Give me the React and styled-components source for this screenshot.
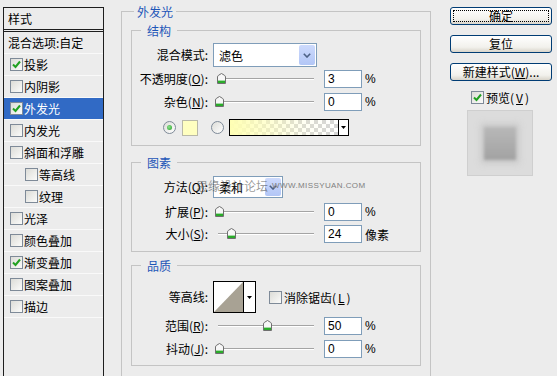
import React from "react";
import styled, { createGlobalStyle } from "styled-components";

const GlobalStyle = createGlobalStyle`
  html, body {
    margin: 0;
    padding: 0;
    background: #ececec;
  }
  body {
    font-family: "Noto Sans CJK SC", "Liberation Sans", sans-serif;
    font-size: 12px;
  }
`;

const FONT = `"Noto Sans CJK SC", "Liberation Sans", sans-serif`;

const Dialog = styled.div`
  display: flex;
  align-items: flex-start;
  width: 557px;
  height: 376px;
  overflow: hidden;
  background: #ececec;
  color: #000;
  font-family: ${FONT};
  font-size: 12px;
`;

/* ---------- left style list ---------- */

const StyleList = styled.div`
  flex: 0 0 101px;
  box-sizing: border-box;
  height: 380px;
  margin: 7px 0 0 3px;
  border: 1px solid #1e1e1e;
  border-bottom: none;
`;

const ListHeader = styled.div`
  height: 21px;
  line-height: 21px;
  padding-left: 4px;
  border-bottom: 3px double #1e1e1e;
`;

const ListRow = styled.div`
  display: flex;
  align-items: center;
  gap: 1px;
  height: 21px;
  padding-left: ${(p) => (p.$indent ? 21 : p.$plain ? 4 : 6)}px;
  border-bottom: 1px solid #f9f9f9;
  background: ${(p) => (p.$selected ? "#316ac5" : "transparent")};
  color: ${(p) => (p.$selected ? "#fff" : "#000")};
  white-space: nowrap;
`;

/* ---------- shared controls ---------- */

const Box = styled.span`
  display: inline-flex;
  align-items: center;
  justify-content: center;
  flex: 0 0 13px;
  width: 13px;
  height: 13px;
  box-sizing: border-box;
  border: 1px solid #7e8a98;
  background: linear-gradient(135deg, #dcdcd7, #fbfbfa);
`;

const Check = ({ on }) => (
  <Box>
    {on && (
      <svg width="9" height="9" viewBox="0 0 9 9">
        <path d="M1 4.5 L3.5 7 L8 1.5" stroke="#21a121" strokeWidth="2" fill="none" />
      </svg>
    )}
  </Box>
);

const RadioCircle = styled.span`
  display: inline-flex;
  align-items: center;
  justify-content: center;
  width: 13px;
  height: 13px;
  box-sizing: border-box;
  border: 1px solid #7e8a98;
  border-radius: 50%;
  background: linear-gradient(135deg, #dcdcd7, #ffffff);
`;

const RadioDot = styled.span`
  width: 5px;
  height: 5px;
  border-radius: 50%;
  background: radial-gradient(circle at 40% 40%, #8fe08f, #21a121);
`;

const Radio = ({ on }) => <RadioCircle>{on && <RadioDot />}</RadioCircle>;

const Main = styled.fieldset`
  flex: 0 0 auto;
  width: 310px;
  height: 400px;
  box-sizing: border-box;
  margin: 5px 0 0 17px;
  padding: 6px 9px 0 9px;
  border: 1px solid #c4c4c4;
  min-width: 0;
`;

const Legend = styled.legend`
  margin-left: ${(p) => p.$offset}px;
  padding: 0 ${(p) => p.$pad}px;
  line-height: 13px;
  color: #1e56b8;
`;

const Group = styled.fieldset`
  box-sizing: border-box;
  width: 290px;
  margin: ${(p) => p.$mt}px 0 0 0;
  padding: 0 0 ${(p) => p.$pb}px 0;
  border: 1px solid #c4c4c4;
  min-width: 0;
`;

const FieldRow = styled.div`
  position: relative;
  display: flex;
  align-items: center;
  height: ${(p) => p.$h}px;
  margin-top: ${(p) => p.$mt}px;
  padding-left: ${(p) => p.$pl || 0}px;
  white-space: nowrap;
`;

const Label = styled.span`
  flex: 0 0 76px;
  margin-right: 5px;
  text-align: right;
  line-height: 14px;
`;

const Select = styled.div`
  display: flex;
  align-items: center;
  width: ${(p) => p.$w}px;
  height: 100%;
  box-sizing: border-box;
  padding-left: 5px;
  border: 1px solid #7f9db9;
  background: #fff;
`;

const DropButton = styled.span`
  display: flex;
  align-items: center;
  justify-content: center;
  width: 16px;
  height: calc(100% - 2px);
  margin: 0 1px 0 auto;
  border-radius: 2px;
  background: linear-gradient(#cddafc, #b2c6f6);
`;

const Chevron = () => (
  <svg width="8" height="5" viewBox="0 0 8 5">
    <path d="M0.8 0.8 L4 4 L7.2 0.8" stroke="#4d6185" strokeWidth="1.6" fill="none" />
  </svg>
);

const SliderWrap = styled.div`
  position: relative;
  display: flex;
  align-items: center;
  width: 104px;
  height: 12px;
  margin-right: 7px;
`;

const Track = styled.div`
  flex: 1;
  height: 0;
  margin: 0 3px 0 5px;
  border-top: 1px solid #a4a4a4;
  border-bottom: 1px solid #fff;
`;

const Thumb = styled.svg`
  position: absolute;
  top: 0;
`;

const Slider = ({ pct }) => (
  <SliderWrap>
    <Track />
    <Thumb width="9" height="11" viewBox="0 0 9 11" style={{ left: `${6 + pct * 96 - 4.5}px` }}>
      <path d="M0.5 4 Q0.5 3 1.5 2.3 L4.5 0.5 L7.5 2.3 Q8.5 3 8.5 4 V10.5 H0.5 Z" fill="#f7f7f7" stroke="#6f6f6f" />
      <rect x="1" y="7.6" width="7" height="2.4" fill="#2aac2a" />
    </Thumb>
  </SliderWrap>
);

const NumInput = styled.div`
  width: 38px;
  height: 18px;
  box-sizing: border-box;
  padding-left: 3px;
  border: 1px solid #7f9db9;
  background: #fff;
  font-family: "Liberation Sans", sans-serif;
  font-size: 12px;
  line-height: 16px;
`;

const Unit = styled.span`
  margin-left: 3px;
  font-family: ${(p) => (p.$cjk ? FONT : `"Liberation Sans", sans-serif`)};
`;

const Swatch = styled.span`
  width: 16px;
  height: 16px;
  box-sizing: border-box;
  margin: 0 13px 0 6px;
  border: 1px solid #b9b9a8;
  background: #ffffc0;
`;

const GradientPicker = styled.div`
  display: flex;
  width: 120px;
  height: 17px;
  margin-left: 5px;
  box-sizing: border-box;
  border: 1px solid #000;
  background: #fff;
`;

const GradientFill = styled.div`
  flex: 1;
  background:
    linear-gradient(to right, #ffffb4, rgba(255, 255, 180, 0.15) 70%, rgba(255, 255, 180, 0)),
    repeating-conic-gradient(#d6d6d6 0 25%, #ffffff 0 50%) 0 0 / 8px 8px;
`;

const ArrowCell = styled.div`
  display: flex;
  align-items: center;
  justify-content: center;
  width: ${(p) => p.$w}px;
  border-left: 1px solid #000;
  background: #fff;
`;

const Tri = () => (
  <svg width="5" height="3" viewBox="0 0 5 3">
    <path d="M0 0H5L2.5 3Z" fill="#000" />
  </svg>
);

const ContourPicker = styled.div`
  display: flex;
  height: 100%;
  box-sizing: border-box;
  border: 1px solid #000;
  margin-right: 13px;
`;

const CheckLabel = styled.span`
  display: flex;
  align-items: center;
  gap: 2px;
`;

const Watermark = styled.span`
  position: absolute;
  left: 64px;
  top: 3px;
  display: flex;
  align-items: center;
  gap: 4px;
  color: rgba(70, 70, 70, 0.55);
  font-size: 12px;
  line-height: 14px;
`;

const WatermarkUrl = styled.span`
  font-family: "Liberation Sans", sans-serif;
  font-size: 8px;
  letter-spacing: 0.4px;
  color: #808080;
`;

/* ---------- right column ---------- */

const Side = styled.div`
  display: flex;
  flex-direction: column;
  width: 102px;
  margin: 7px 0 0 19px;
`;

const Button = styled.div`
  display: flex;
  align-items: center;
  justify-content: center;
  height: 18px;
  margin-bottom: 10px;
  box-sizing: border-box;
  border: 1px solid #003c74;
  border-radius: 3px;
  background: linear-gradient(#ffffff, #f2f1ec 70%, #d8d4ca);
  line-height: 14px;
  outline: ${(p) => (p.$default ? "1px dotted #000" : "none")};
  outline-offset: -4px;
  white-space: nowrap;
`;

const PreviewToggle = styled.div`
  display: flex;
  align-items: center;
  gap: 2px;
  height: 14px;
  margin: -1px 0 0 21px;
`;

const PreviewBox = styled.div`
  display: flex;
  align-items: center;
  justify-content: center;
  width: 66px;
  height: 66px;
  margin: 6px 0 0 17px;
  box-sizing: border-box;
  border: 1px solid #cfcfcf;
  background: #dcdcdc;
`;

const PreviewShape = styled.div`
  width: 32px;
  height: 33px;
  background: linear-gradient(#b8b8b8, #a2a2a2);
  filter: blur(1.5px);
  box-shadow: 0 0 6px 3px rgba(160, 160, 160, 0.35);
`;

const styles = [
  { name: "投影", on: true },
  { name: "内阴影" },
  { name: "外发光", on: true, selected: true },
  { name: "内发光" },
  { name: "斜面和浮雕" },
  { name: "等高线", indent: true },
  { name: "纹理", indent: true },
  { name: "光泽" },
  { name: "颜色叠加" },
  { name: "渐变叠加", on: true },
  { name: "图案叠加" },
  { name: "描边" },
];

const SliderRow = ({ label, mt, pct, value, unit, cjkUnit }) => (
  <FieldRow $h={18} $mt={mt}>
    <Label>{label}</Label>
    <Slider pct={pct} />
    <NumInput>{value}</NumInput>
    <Unit $cjk={cjkUnit}>{unit}</Unit>
  </FieldRow>
);

export default function App() {
  return (
    <Dialog>
      <GlobalStyle />
      <StyleList>
        <ListHeader>样式</ListHeader>
        <ListRow $plain>混合选项:自定</ListRow>
        {styles.map((s) => (
          <ListRow key={s.name} $indent={s.indent} $selected={s.selected}>
            <Check on={s.on} />
            {s.name}
          </ListRow>
        ))}
      </StyleList>

      <Main>
        <Legend $offset={3} $pad={3}>外发光</Legend>

        <Group $mt={0} $pb={9}>
          <Legend $offset={9} $pad={6}>结构</Legend>
          <FieldRow $h={24} $mt={6}>
            <Label>混合模式:</Label>
            <Select $w={104}>
              滤色
              <DropButton>
                <Chevron />
              </DropButton>
            </Select>
          </FieldRow>
          <SliderRow label={<>不透明度(<u>O</u>):</>} mt={3} pct={0.03} value="3" unit="%" />
          <SliderRow label={<>杂色(<u>N</u>):</>} mt={5} pct={0} value="0" unit="%" />
          <FieldRow $h={17} $mt={8} $pl={31}>
            <Radio on />
            <Swatch />
            <Radio />
            <GradientPicker>
              <GradientFill />
              <ArrowCell $w={9}>
                <Tri />
              </ArrowCell>
            </GradientPicker>
          </FieldRow>
        </Group>

        <Group $mt={10} $pb={8}>
          <Legend $offset={9} $pad={6}>图素</Legend>
          <FieldRow $h={22} $mt={7}>
            <Label>方法(<u>Q</u>):</Label>
            <Select $w={70}>
              柔和
              <DropButton>
                <Chevron />
              </DropButton>
            </Select>
            <Watermark>
              思缘设计论坛
              <WatermarkUrl>WWW.MISSYUAN.COM</WatermarkUrl>
            </Watermark>
          </FieldRow>
          <SliderRow label={<>扩展(<u>P</u>):</>} mt={5} pct={0} value="0" unit="%" />
          <SliderRow label={<>大小(<u>S</u>):</>} mt={4} pct={0.135} value="24" unit="像素" cjkUnit />
        </Group>

        <Group $mt={7} $pb={7}>
          <Legend $offset={9} $pad={6}>品质</Legend>
          <FieldRow $h={32} $mt={9}>
            <Label>等高线:</Label>
            <ContourPicker>
              <svg width="29" height="30" viewBox="0 0 29 30">
                <rect width="29" height="30" fill="#fff" />
                <polygon points="0,30 29,0 29,30" fill="#a8a294" />
              </svg>
              <ArrowCell $w={11}>
                <Tri />
              </ArrowCell>
            </ContourPicker>
            <CheckLabel>
              <Check />
              消除锯齿(<u>L</u>)
            </CheckLabel>
          </FieldRow>
          <SliderRow label={<>范围(<u>R</u>):</>} mt={4} pct={0.5} value="50" unit="%" />
          <SliderRow label={<>抖动(<u>J</u>):</>} mt={5} pct={0} value="0" unit="%" />
        </Group>
      </Main>

      <Side>
        <Button $default>确定</Button>
        <Button>复位</Button>
        <Button>
          新建样式(<u>W</u>)...
        </Button>
        <PreviewToggle>
          <Check on />
          预览(<u>V</u>)
        </PreviewToggle>
        <PreviewBox>
          <PreviewShape />
        </PreviewBox>
      </Side>
    </Dialog>
  );
}
